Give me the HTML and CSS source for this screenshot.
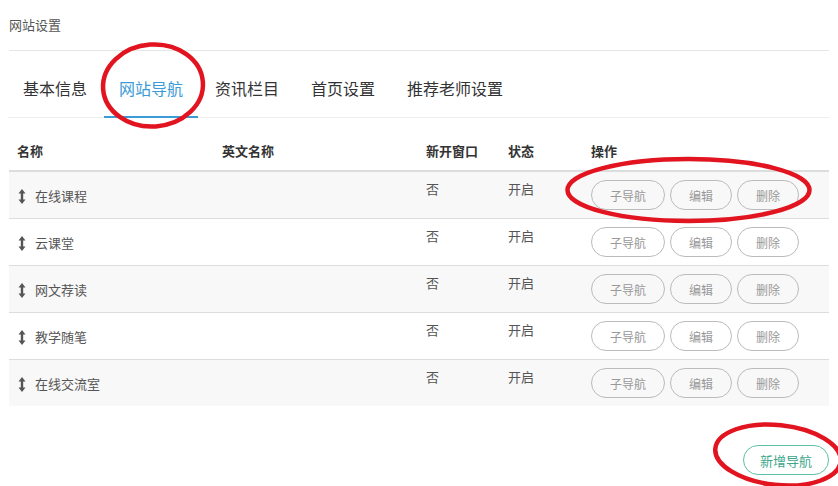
FILE: index.html
```html
<!DOCTYPE html>
<html lang="zh-CN">
<head>
    <meta charset="UTF-8">
    <title>网站设置 - 网站导航</title>
    <link rel="stylesheet" href="styles.css">
</head>
<body>
    <div class="page">
        <div class="title">网站设置</div>

        <div class="tabs">
            <a class="tab">基本信息</a>
            <a class="tab active">网站导航</a>
            <a class="tab">资讯栏目</a>
            <a class="tab">首页设置</a>
            <a class="tab">推荐老师设置</a>
        </div>

        <table class="nav-table">
            <thead>
                <tr>
                    <th class="col-name">名称</th>
                    <th class="col-en">英文名称</th>
                    <th class="col-win">新开窗口</th>
                    <th class="col-state">状态</th>
                    <th>操作</th>
                </tr>
            </thead>
            <tbody>
                <tr>
                    <td class="name"><svg class="sort" viewBox="0 0 8 15"><path d="M4 0 L7.5 4.5 H5.2 V10.5 H7.5 L4 15 L0.5 10.5 H2.8 V4.5 H0.5 Z"/></svg>在线课程</td>
                    <td></td>
                    <td>否</td>
                    <td>开启</td>
                    <td><div class="ops"><button class="btn">子导航</button><button class="btn">编辑</button><button class="btn">删除</button></div></td>
                </tr>
                <tr>
                    <td class="name"><svg class="sort" viewBox="0 0 8 15"><path d="M4 0 L7.5 4.5 H5.2 V10.5 H7.5 L4 15 L0.5 10.5 H2.8 V4.5 H0.5 Z"/></svg>云课堂</td>
                    <td></td>
                    <td>否</td>
                    <td>开启</td>
                    <td><div class="ops"><button class="btn">子导航</button><button class="btn">编辑</button><button class="btn">删除</button></div></td>
                </tr>
                <tr>
                    <td class="name"><svg class="sort" viewBox="0 0 8 15"><path d="M4 0 L7.5 4.5 H5.2 V10.5 H7.5 L4 15 L0.5 10.5 H2.8 V4.5 H0.5 Z"/></svg>网文荐读</td>
                    <td></td>
                    <td>否</td>
                    <td>开启</td>
                    <td><div class="ops"><button class="btn">子导航</button><button class="btn">编辑</button><button class="btn">删除</button></div></td>
                </tr>
                <tr>
                    <td class="name"><svg class="sort" viewBox="0 0 8 15"><path d="M4 0 L7.5 4.5 H5.2 V10.5 H7.5 L4 15 L0.5 10.5 H2.8 V4.5 H0.5 Z"/></svg>教学随笔</td>
                    <td></td>
                    <td>否</td>
                    <td>开启</td>
                    <td><div class="ops"><button class="btn">子导航</button><button class="btn">编辑</button><button class="btn">删除</button></div></td>
                </tr>
                <tr>
                    <td class="name"><svg class="sort" viewBox="0 0 8 15"><path d="M4 0 L7.5 4.5 H5.2 V10.5 H7.5 L4 15 L0.5 10.5 H2.8 V4.5 H0.5 Z"/></svg>在线交流室</td>
                    <td></td>
                    <td>否</td>
                    <td>开启</td>
                    <td><div class="ops"><button class="btn">子导航</button><button class="btn">编辑</button><button class="btn">删除</button></div></td>
                </tr>
            </tbody>
        </table>

        <div class="footer">
            <button class="btn btn-add">新增导航</button>
        </div>

        <!-- hand-drawn annotation marks -->
        <svg class="marks" viewBox="0 0 838 486">
            <ellipse cx="153" cy="85.5" rx="50" ry="41" transform="rotate(-4 153 85.5)"/>
            <ellipse cx="688.5" cy="190" rx="121" ry="31"/>
            <ellipse cx="778" cy="455" rx="63" ry="30" transform="rotate(6 778 455)"/>
        </svg>
    </div>
</body>
</html>
```

FILE: styles.css
```css
body {
    margin: 0;
    font-family: "Noto Sans CJK SC", "Liberation Sans", sans-serif;
    color: #555;
    background-color: #fff;
}
.page {
    position: relative;
    width: 838px;
    height: 486px;
    padding: 0 9px;
    box-sizing: border-box;
    overflow: hidden;
}
.title {
    height: 50px;
    line-height: 50px;
    font-size: 13px;
    color: #555;
    border-bottom: 1px solid #e6e6e6;
}
.tabs {
    display: flex;
    margin-left: -1px;
    border-bottom: 1px solid #eee;
}
.tab {
    display: block;
    padding: 29px 15px 20px;
    margin-right: 2px;
    margin-bottom: -1px;
    font-size: 16px;
    line-height: 16px;
    color: #333;
    border-bottom: 2px solid transparent;
}
.tab.active {
    color: #3a9bd6;
    border-bottom-color: #3a9bd6;
}
.nav-table {
    width: 100%;
    border-collapse: collapse;
    table-layout: fixed;
    font-size: 13px;
}
.nav-table th {
    text-align: left;
    font-weight: bold;
    color: #333;
    padding: 23px 8px 9px;
    line-height: 20px;
    border-bottom: 2px solid #ddd;
}
.col-name { width: 189px; }
.col-en { width: 188px; }
.col-win { width: 66px; }
.col-state { width: 67px; }
.nav-table td {
    padding: 8px;
    line-height: 17px;
    vertical-align: top;
    color: #555;
    border-bottom: 1px solid #ddd;
}
.nav-table tbody tr:nth-child(odd) {
    background-color: #f8f8f8;
}
.nav-table tbody tr:last-child td {
    border-bottom: none;
}
.nav-table td.name {
    vertical-align: middle;
}
.sort {
    width: 8px;
    height: 15px;
    margin: 0 9px 0 1px;
    vertical-align: -3px;
    fill: #555;
}
.ops {
    display: flex;
    gap: 5px;
}
.btn {
    height: 30px;
    padding: 0 18px;
    border: 1px solid #bbb;
    border-radius: 15px;
    background: transparent;
    color: #999;
    font-family: inherit;
    font-size: 12px;
    white-space: nowrap;
    cursor: pointer;
}
.footer {
    display: flex;
    justify-content: flex-end;
    margin-top: 39px;
}
.btn-add {
    width: 86px;
    padding: 0;
    font-size: 13px;
    color: #3ea68b;
    border-color: #5fbfa6;
}
.marks {
    position: absolute;
    left: 0;
    top: 0;
    width: 838px;
    height: 486px;
    pointer-events: none;
}
.marks ellipse {
    fill: none;
    stroke: #e1141f;
    stroke-width: 4.5;
}
```
